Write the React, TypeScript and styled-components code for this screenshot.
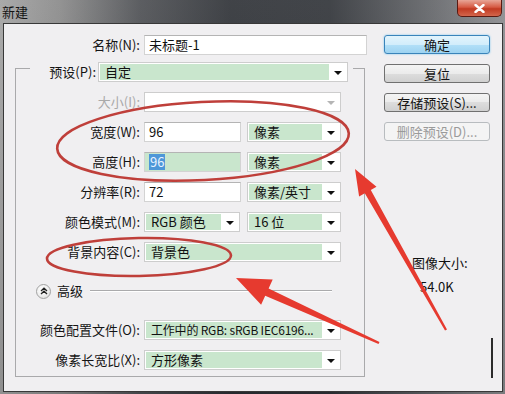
import React from 'react'
import styled, { createGlobalStyle } from 'styled-components'

const GlobalStyle = createGlobalStyle`
  html, body {
    margin: 0;
    padding: 0;
  }
  body {
    width: 505px;
    height: 394px;
    overflow: hidden;
    font-family: 'Noto Sans CJK SC', 'Noto Sans', sans-serif;
    font-size: 13px;
    color: #111;
  }
`

const Window = styled.div`
  position: relative;
  width: 505px;
  height: 394px;
  display: flex;
  flex-direction: column;
  background:
    linear-gradient(180deg, rgba(255, 255, 255, 0.1), rgba(0, 0, 0, 0.1)),
    linear-gradient(90deg, #a0a0a0 0, #878787 60px, #4a4c50 140px, #2b2e33 230px, #2d3035 330px, #5a5c60 420px, #88898c 505px);
`

const TitleBar = styled.div`
  height: 23px;
  display: flex;
  align-items: center;
  padding-left: 2px;
`

const Title = styled.span`
  font-size: 13px;
  line-height: 18px;
  color: #141414;
`

const CloseButton = styled.div`
  margin-left: auto;
  margin-right: 3px;
  align-self: flex-start;
  width: 45px;
  height: 17px;
  box-sizing: border-box;
  border: 1px solid #5a1a12;
  border-top: none;
  border-radius: 0 0 5px 5px;
  background: linear-gradient(180deg, #e8a697 0%, #d65a43 45%, #c13a22 55%, #d3664c 100%);
  display: flex;
  align-items: center;
  justify-content: center;
`

const Dialog = styled.div`
  flex: 1;
  margin: 0 2px 2px 3px;
  border: 1px solid #383838;
  background: #f0eff1;
  display: flex;
`

const LeftCol = styled.div`
  width: 366px;
  padding-top: 11px;
  display: flex;
  flex-direction: column;
`

const Row = styled.div`
  display: flex;
  align-items: center;
  height: 20px;
`

const Label = styled.span<{ $w: number; $disabled?: boolean; $gap?: number }>`
  width: ${(p) => p.$w}px;
  margin-right: ${(p) => p.$gap ?? 4}px;
  text-align: right;
  white-space: nowrap;
  line-height: 18px;
  color: ${(p) => (p.$disabled ? '#a9a9a9' : '#141414')};
`

const TextBox = styled.div<{ $w: number; $green?: boolean }>`
  width: ${(p) => p.$w}px;
  height: 20px;
  box-sizing: border-box;
  border: 1px solid #d3d3d3;
  border-top-color: #b4b4b4;
  background: ${(p) => (p.$green ? '#c9e6cd' : '#fff')};
  padding-left: 4px;
  display: flex;
  align-items: center;
  line-height: 16px;
  white-space: nowrap;
`

const Selected = styled.span`
  background: #4e97d8;
  color: #e8f2ff;
  padding: 0 1px;
`

const SelectBox = styled.div<{ $w: number; $ml?: number }>`
  width: ${(p) => p.$w}px;
  height: 20px;
  margin-left: ${(p) => p.$ml ?? 0}px;
  box-sizing: border-box;
  border: 1px solid #cdcdcd;
  background: #fff;
  padding: 1px;
  display: flex;
  flex-shrink: 0;
`

const SelectValue = styled.div<{ $disabled?: boolean; $compact?: boolean }>`
  flex: 1;
  min-width: 0;
  background: ${(p) => (p.$disabled ? '#fff' : '#c9e6cd')};
  padding-left: 5px;
  display: flex;
  align-items: center;
  line-height: 16px;
  white-space: nowrap;
  font-size: ${(p) => (p.$compact ? '12px' : '13px')};
  letter-spacing: ${(p) => (p.$compact ? '-0.2px' : '0')};
`

const ArrowBox = styled.div`
  width: 17px;
  display: flex;
  align-items: center;
  justify-content: center;
`

const Caret = styled.span<{ $disabled?: boolean }>`
  width: 0;
  height: 0;
  border-left: 4px solid transparent;
  border-right: 4px solid transparent;
  border-top: 4px solid ${(p) => (p.$disabled ? '#b5b5b5' : '#111')};
  margin-top: 1px;
`

const Group = styled.fieldset`
  margin: 7px 0 0 11px;
  width: 350px;
  box-sizing: border-box;
  min-width: 0;
  border: 1px solid #a9a9ab;
  padding: 0 0 6px 0;
`

const Legend = styled.legend`
  margin-left: 14px;
  padding: 0 5px;
  height: 12px;
  display: flex;
  align-items: flex-start;
`

const Rows = styled.div<{ $top: number }>`
  margin-top: ${(p) => p.$top}px;
  display: flex;
  flex-direction: column;
  gap: 10px;
`

const AdvancedRow = styled.div`
  margin-top: 21px;
  height: 16px;
  padding-left: 20px;
  padding-right: 32px;
  display: flex;
  align-items: center;
`

const RoundToggle = styled.div`
  width: 15px;
  height: 15px;
  box-sizing: border-box;
  border-radius: 50%;
  border: 1px solid #a2a2a2;
  background: radial-gradient(circle at 40% 35%, #ffffff 0%, #eeeeee 55%, #d2d2d2 100%);
  display: flex;
  align-items: center;
  justify-content: center;
`

const AdvancedText = styled.span`
  margin-left: 6px;
  line-height: 16px;
`

const Etched = styled.div`
  flex: 1;
  margin-left: 7px;
  border-top: 1px solid #aaaaac;
  border-bottom: 1px solid #ffffff;
`

const RightCol = styled.div`
  width: 110px;
  margin-left: 14px;
  padding-top: 11px;
  display: flex;
  flex-direction: column;
`

const Buttons = styled.div`
  display: flex;
  flex-direction: column;
  gap: 10px;
`

const Button = styled.div<{ $variant?: 'default' | 'disabled' }>`
  width: 106px;
  height: 19px;
  box-sizing: border-box;
  border-radius: 3px;
  display: flex;
  align-items: center;
  justify-content: center;
  line-height: 16px;
  white-space: nowrap;
  border: 1px solid
    ${(p) => (p.$variant === 'default' ? '#3a84ba' : p.$variant === 'disabled' ? '#b8bcbf' : '#707070')};
  color: ${(p) => (p.$variant === 'disabled' ? '#9a9a9a' : '#141414')};
  background: ${(p) =>
    p.$variant === 'default'
      ? 'linear-gradient(180deg, #e3f4fc 0%, #d2edfb 50%, #b3e0f8 50%, #9dd3f1 100%)'
      : p.$variant === 'disabled'
      ? '#f4f4f4'
      : 'linear-gradient(180deg, #f4f4f4 0%, #ebebeb 50%, #dddddd 50%, #d0d0d0 100%)'};
  box-shadow: ${(p) => (p.$variant === 'default' ? '0 0 2px #6ec3f0' : 'none')};
`

const InfoLine = styled.div<{ $top: number; $left: number }>`
  margin-top: ${(p) => p.$top}px;
  padding-left: ${(p) => p.$left}px;
  line-height: 16px;
  white-space: nowrap;
`

const MemoryBar = styled.div`
  margin-top: 43px;
  margin-left: 107px;
  width: 2px;
  height: 40px;
  background: #2b2b2b;
`

const Annotations = styled.svg`
  position: absolute;
  left: 0;
  top: 0;
  pointer-events: none;
`

type SelectProps = { w: number; value?: React.ReactNode; ml?: number; disabled?: boolean; compact?: boolean }

const Select = ({ w, value, ml, disabled, compact }: SelectProps) => (
  <SelectBox $w={w} $ml={ml}>
    <SelectValue $disabled={disabled} $compact={compact}>
      {value}
    </SelectValue>
    <ArrowBox>
      <Caret $disabled={disabled} />
    </ArrowBox>
  </SelectBox>
)

const App = () => (
  <>
    <GlobalStyle />
    <Window>
      <TitleBar>
        <Title>新建</Title>
        <CloseButton>
          <svg width="11" height="9" viewBox="0 0 11 9">
            <path d="M1.5 1 L9.5 8 M9.5 1 L1.5 8" stroke="#fff" strokeWidth="2.4" strokeLinecap="round" />
          </svg>
        </CloseButton>
      </TitleBar>

      <Dialog>
        <LeftCol>
          <Row>
            <Label $w={136}>名称(N):</Label>
            <TextBox $w={223}>未标题-1</TextBox>
          </Row>

          <Group>
            <Legend>
              <Row>
                <Label $w={61} $gap={2}>预设(P):</Label>
                <Select w={250} value="自定" />
              </Row>
            </Legend>

            <Rows $top={18}>
              <Row>
                <Label $w={124} $disabled>大小(I):</Label>
                <Select w={197} disabled />
              </Row>
              <Row>
                <Label $w={124}>宽度(W):</Label>
                <TextBox $w={97}>96</TextBox>
                <Select w={94} ml={6} value="像素" />
              </Row>
              <Row>
                <Label $w={124}>高度(H):</Label>
                <TextBox $w={97} $green>
                  <Selected>96</Selected>
                </TextBox>
                <Select w={94} ml={6} value="像素" />
              </Row>
              <Row>
                <Label $w={124}>分辨率(R):</Label>
                <TextBox $w={97}>72</TextBox>
                <Select w={94} ml={6} value="像素/英寸" />
              </Row>
              <Row>
                <Label $w={124}>颜色模式(M):</Label>
                <Select w={96} value="RGB 颜色" />
                <Select w={94} ml={7} value="16 位" />
              </Row>
              <Row>
                <Label $w={124}>背景内容(C):</Label>
                <Select w={197} value="背景色" />
              </Row>
            </Rows>

            <AdvancedRow>
              <RoundToggle>
                <svg width="8" height="8" viewBox="0 0 8 8">
                  <path d="M1 4 L4 1.3 L7 4 M1 7 L4 4.3 L7 7" stroke="#222" strokeWidth="1.4" fill="none" />
                </svg>
              </RoundToggle>
              <AdvancedText>高级</AdvancedText>
              <Etched />
            </AdvancedRow>

            <Rows $top={21}>
              <Row>
                <Label $w={124}>颜色配置文件(O):</Label>
                <Select w={197} compact value="工作中的 RGB: sRGB IEC6196..." />
              </Row>
              <Row>
                <Label $w={124}>像素长宽比(X):</Label>
                <Select w={197} value="方形像素" />
              </Row>
            </Rows>
          </Group>
        </LeftCol>

        <RightCol>
          <Buttons>
            <Button $variant="default">确定</Button>
            <Button>复位</Button>
            <Button>存储预设(S)...</Button>
            <Button $variant="disabled">删除预设(D)...</Button>
          </Buttons>
          <InfoLine $top={114} $left={28}>图像大小:</InfoLine>
          <InfoLine $top={8} $left={36}>54.0K</InfoLine>
          <MemoryBar />
        </RightCol>
      </Dialog>

      <Annotations width="505" height="394" viewBox="0 0 505 394">
        <ellipse cx="203" cy="141" rx="146" ry="39" transform="rotate(-3 203 141)" fill="none" stroke="#bf3f3a" strokeWidth="2.6" />
        <ellipse cx="139" cy="257" rx="92" ry="19" transform="rotate(-1 139 257)" fill="none" stroke="#bf3f3a" strokeWidth="2.6" />
        <polygon
          points="355,169 376.5,186.7 370.8,189.9 447,329.4 445,330.6 364.8,193.3 359.1,196.5"
          fill="#e63a2f"
        />
        <polygon
          points="236,278 272.7,279.4 268.6,288.5 379.5,341.9 378.5,344.1 265.2,295.7 261.1,304.8"
          fill="#e63a2f"
        />
      </Annotations>
    </Window>
  </>
)

export default App
